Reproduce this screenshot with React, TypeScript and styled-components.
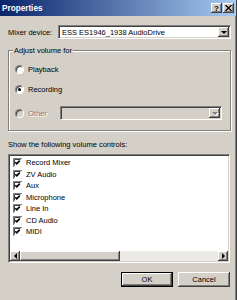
import React from "react";
import styled, { createGlobalStyle } from "styled-components";

const face = "#d4d0c8";
const shadow = "#808080";
const dark = "#404040";
const light = "#ffffff";

const raised = `
  background: ${face};
  box-shadow: inset -1px -1px ${dark}, inset 1px 1px ${light},
    inset -2px -2px ${shadow}, inset 2px 2px ${face};
`;

const sunken = `
  border: 1px solid;
  border-color: ${shadow} ${light} ${light} ${shadow};
  box-shadow: inset 1px 1px ${dark}, inset -1px -1px ${face};
`;

const GlobalStyle = createGlobalStyle`
  html, body {
    margin: 0;
    padding: 0;
    background: ${face};
  }
  body {
    font-family: "Liberation Sans", Arial, sans-serif;
    font-size: 7.5px;
    line-height: 9px;
    color: #000;
  }
`;

const Window = styled.div`
  width: 237px;
  height: 300px;
  box-sizing: border-box;
  background: ${face};
  border-right: 1px solid ${dark};
  box-shadow: inset -1px 0 ${shadow};
  display: flex;
  flex-direction: column;
  overflow: hidden;
`;

const TitleBar = styled.div`
  height: 16px;
  flex: none;
  background: linear-gradient(to right, #0a246a, #a6caf0);
  display: flex;
  align-items: center;
  padding: 0 2px 0 2px;
`;

const Title = styled.div`
  color: #fff;
  font-weight: bold;
  font-size: 8.2px;
  flex: 1;
`;

const CaptionButton = styled.div`
  ${raised}
  width: 11px;
  height: 10px;
  display: flex;
  align-items: center;
  justify-content: center;
  font-weight: bold;
  font-size: 8px;
  &:last-child {
    margin-left: 1px;
  }
`;

const Body = styled.div`
  flex: 1;
  display: flex;
  flex-direction: column;
  padding: 9px 5px 0 8px;
`;

const MixerRow = styled.div`
  display: flex;
  align-items: center;
  height: 14px;
`;

const FieldLabel = styled.span`
  width: 50px;
`;

const Combo = styled.div<{ disabled?: boolean; width: number }>`
  ${sunken}
  box-sizing: border-box;
  width: ${({ width }) => width}px;
  height: 14px;
  background: ${({ disabled }) => (disabled ? face : light)};
  display: flex;
  align-items: center;
  justify-content: space-between;
  padding-left: 3px;
  margin-left: ${({ disabled }) => (disabled ? "auto" : "0")};
`;

const DropButton = styled.div<{ disabled?: boolean }>`
  ${raised}
  width: 11px;
  height: 10px;
  margin-right: 1px;
  display: flex;
  align-items: center;
  justify-content: center;
  &::after {
    content: "";
    border-left: 3px solid transparent;
    border-right: 3px solid transparent;
    border-top: 3px solid ${({ disabled }) => (disabled ? shadow : "#000")};
    filter: ${({ disabled }) =>
      disabled ? `drop-shadow(1px 1px 0 ${light})` : "none"};
  }
`;

const Group = styled.div`
  position: relative;
  margin-top: 11px;
  height: 81px;
  box-sizing: border-box;
  border: 1px solid ${shadow};
  box-shadow: inset 1px 1px ${light}, 1px 1px ${light};
  display: flex;
  flex-direction: column;
  gap: 8px;
  padding: 12px 8px 0 6px;
`;

const Legend = styled.span`
  position: absolute;
  top: -5px;
  left: 4px;
  padding: 0 1px;
  background: ${face};
`;

const RadioRow = styled.div<{ tall?: boolean }>`
  display: flex;
  align-items: center;
  height: ${({ tall }) => (tall ? 14 : 12)}px;
  margin-top: ${({ tall }) => (tall ? 3 : 0)}px;
`;

const Radio = styled.span<{ checked?: boolean; disabled?: boolean }>`
  width: 9px;
  height: 9px;
  box-sizing: border-box;
  border-radius: 50%;
  border: 1px solid;
  border-color: ${shadow} ${light} ${light} ${shadow};
  box-shadow: inset 1px 1px ${dark};
  background: ${({ disabled }) => (disabled ? face : light)};
  margin-right: 4px;
  display: flex;
  align-items: center;
  justify-content: center;
  &::after {
    content: "";
    width: 3px;
    height: 3px;
    border-radius: 50%;
    background: ${({ checked }) => (checked ? "#000" : "transparent")};
  }
`;

const RadioText = styled.span<{ disabled?: boolean }>`
  color: ${({ disabled }) => (disabled ? shadow : "#000")};
  text-shadow: ${({ disabled }) => (disabled ? `1px 1px 0 ${light}` : "none")};
`;

const Caption = styled.div`
  margin-top: 9px;
`;

const ListView = styled.div`
  ${sunken}
  margin-top: 5px;
  width: 222px;
  height: 109px;
  box-sizing: border-box;
  background: ${light};
  display: flex;
  flex-direction: column;
  padding: 1px;
`;

const Items = styled.div`
  flex: 1;
  padding: 1px 0 0 3px;
`;

const Item = styled.div`
  display: flex;
  align-items: center;
  height: 11.5px;
  gap: 4px;
`;

const ScrollBar = styled.div`
  height: 10px;
  display: flex;
  background: #eceae6;
`;

const ScrollArrow = styled.div<{ dir: "left" | "right" }>`
  ${raised}
  width: 10px;
  height: 10px;
  display: flex;
  align-items: center;
  justify-content: center;
  margin-left: ${({ dir }) => (dir === "right" ? "auto" : "0")};
  &::after {
    content: "";
    border-top: 3px solid transparent;
    border-bottom: 3px solid transparent;
    ${({ dir }) =>
      dir === "left"
        ? "border-right: 3px solid #000;"
        : "border-left: 3px solid #000;"}
  }
`;

const Thumb = styled.div`
  ${raised}
  width: 100px;
  height: 10px;
`;

const ButtonRow = styled.div`
  margin-top: 9px;
  display: flex;
  justify-content: flex-end;
  gap: 5px;
  padding-right: 1px;
`;

const Button = styled.div<{ isDefault?: boolean }>`
  ${raised}
  width: 52px;
  height: 15px;
  box-sizing: border-box;
  display: flex;
  align-items: center;
  justify-content: center;
  border: ${({ isDefault }) => (isDefault ? "1px solid #000" : "none")};
`;

const CheckBox = () => (
  <svg width="9" height="9" viewBox="0 0 9 9">
    <rect x="0.5" y="0.5" width="8" height="8" fill="#fff" stroke="#808080" />
    <path d="M1 8.5H8.5V1" fill="none" stroke="#fff" />
    <path d="M1.5 7.5V1.5H7.5" fill="none" stroke="#404040" />
    <path
      d="M2.3 4.3L3.8 5.9L6.7 2.6"
      fill="none"
      stroke="#000"
      strokeWidth="1.6"
    />
  </svg>
);

const controls = [
  "Record Mixer",
  "ZV Audio",
  "Aux",
  "Microphone",
  "Line In",
  "CD Audio",
  "MIDI",
];

export default function App() {
  return (
    <>
      <GlobalStyle />
      <Window>
        <TitleBar>
          <Title>Properties</Title>
          <CaptionButton>?</CaptionButton>
          <CaptionButton>
            <svg width="7" height="6" viewBox="0 0 7 6">
              <path d="M0.5 0L6.5 6M6.5 0L0.5 6" stroke="#000" strokeWidth="1.3" />
            </svg>
          </CaptionButton>
        </TitleBar>
        <Body>
          <MixerRow>
            <FieldLabel>Mixer device:</FieldLabel>
            <Combo width={173}>
              <span>ESS ES1946_1938 AudioDrive</span>
              <DropButton />
            </Combo>
          </MixerRow>
          <Group>
            <Legend>Adjust volume for</Legend>
            <RadioRow>
              <Radio />
              <RadioText>Playback</RadioText>
            </RadioRow>
            <RadioRow>
              <Radio checked />
              <RadioText>Recording</RadioText>
            </RadioRow>
            <RadioRow tall>
              <Radio disabled />
              <RadioText disabled>Other</RadioText>
              <Combo width={162} disabled>
                <span />
                <DropButton disabled />
              </Combo>
            </RadioRow>
          </Group>
          <Caption>Show the following volume controls:</Caption>
          <ListView>
            <Items>
              {controls.map((c) => (
                <Item key={c}>
                  <CheckBox />
                  <span>{c}</span>
                </Item>
              ))}
            </Items>
            <ScrollBar>
              <ScrollArrow dir="left" />
              <Thumb />
              <ScrollArrow dir="right" />
            </ScrollBar>
          </ListView>
          <ButtonRow>
            <Button isDefault>OK</Button>
            <Button>Cancel</Button>
          </ButtonRow>
        </Body>
      </Window>
    </>
  );
}
